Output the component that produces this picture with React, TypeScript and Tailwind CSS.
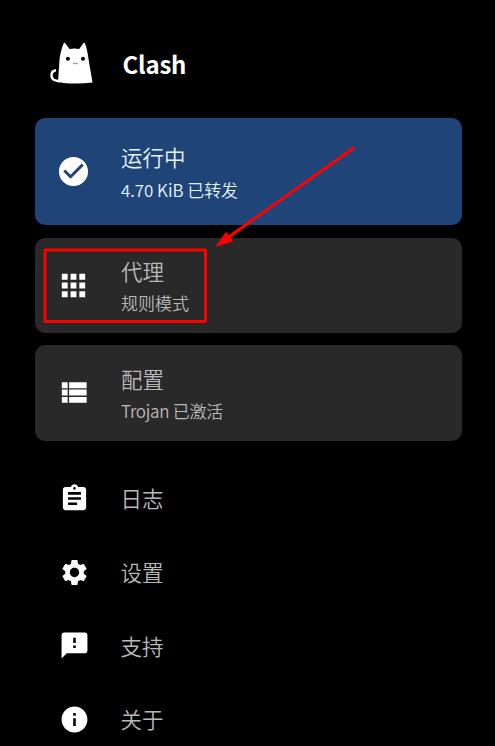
import type { ReactNode } from "react";
import { MdApps, MdAssignment, MdCheckCircle, MdFeedback, MdInfo, MdSettings } from "react-icons/md";

function CatLogo() {
  return (
    <svg viewBox="0 0 44 43" className="block h-[43px] w-[44px]" fill="white">
      <path d="M9.600 16.500C10.500 10.500 12 5 13.600 1.400c.5-1.100 1.200-.9 1.900 0l4 5.700c3.200-.7 6.500-.7 9.700 0l3.900-5.600c.7-1 1.500-1.100 1.900 0 1.600 4 2.700 9.200 3.300 14.300l4.200 24.700c-9.500 1.300-18.800 1.500-29 .4L8 39.800z" />
      <path d="M6 28.300C.1 29 -.2 37.300 6.200 38.700l4 .8" fill="none" stroke="white" strokeWidth="2.400" />
      <circle cx="17.900" cy="16.700" r="2" fill="#000" />
      <circle cx="33" cy="16.700" r="2" fill="#000" />
      <path d="M23.300 21.600c1 .3 1.700 0 2.100-.7.500.7 1.200 1 2.200.7" fill="none" stroke="#444" strokeWidth=".8" />
    </svg>
  );
}

function ViewListIcon() {
  return (
    <svg viewBox="0 0 24 24" className="size-[35px]" fill="currentColor">
      <path d="M4 14h4v-4H4v4zm0 5h4v-4H4v4zM4 9h4V5H4v4zm5 5h12v-4H9v4zm0 5h12v-4H9v4zM9 5v4h12V5H9z" />
    </svg>
  );
}

function Card({ icon, title, detail, className, titleClassName = "", detailClassName = "" }: { icon: ReactNode; title: string; detail: string; className: string; titleClassName?: string; detailClassName?: string }) {
  return (
    <section className={`flex items-center rounded-[10px] pl-[21.5px] ${className}`}>
      <div className="w-[65px] shrink-0 text-white">{icon}</div>
      <div className="whitespace-nowrap pt-[4px]">
        <div className={`text-[21.5px] ${titleClassName || "leading-[32px]"}`}>{title}</div>
        <div className={`text-[17px] leading-[32px] ${detailClassName}`}>{detail}</div>
      </div>
    </section>
  );
}

const menu = [
  { label: "日志", Icon: MdAssignment },
  { label: "设置", Icon: MdSettings },
  { label: "支持", Icon: MdFeedback },
  { label: "关于", Icon: MdInfo },
];

export default function App() {
  return (
    <main className="relative h-[746px] w-[495px] overflow-hidden bg-black pl-[34.5px] pr-[33.5px] font-['Noto_Sans_CJK_SC',sans-serif] font-[350] text-[#b8b8b8]">
      <header className="flex h-[118px] items-start pl-[15px] pt-[42px]">
        <CatLogo />
        <h1 className="ml-[29px] mt-[5px] text-[24px] font-bold leading-[34px] tracking-[-0.2px] text-white">Clash</h1>
      </header>
      <div className="flex flex-col gap-[12.5px]">
        <Card className="h-[107px] bg-[#1f4477] text-[#e5f2ff]" titleClassName="mb-[2px] leading-[30px]" detailClassName="tracking-[-0.05px]" icon={<MdCheckCircle className="size-[35px]" />} title="运行中" detail="4.70 KiB 已转发" />
        <Card className="h-[95px] bg-[#292929]" icon={<MdApps className="size-[35px]" />} title="代理" detail="规则模式" />
        <Card className="h-[95.5px] bg-[#292929]" detailClassName="tracking-[-0.3px]" icon={<ViewListIcon />} title="配置" detail="Trojan 已激活" />
      </div>
      <nav className="mt-[21px]">
        {menu.map(({ label, Icon }) => (
          <div key={label} className="flex h-[73.7px] items-center pl-[24px]">
            <Icon className="size-[31px] text-white" />
            <span className="ml-[31px] text-[21.5px] leading-[32px]">{label}</span>
          </div>
        ))}
      </nav>
      <svg viewBox="0 0 495 746" className="pointer-events-none absolute inset-0 h-[746px] w-[495px]">
        <rect x="45" y="250" width="160.5" height="71.5" rx=".5" fill="none" stroke="#f00" strokeWidth="3" />
        <path d="M354.300 147.500 228 237.500" stroke="#f00" strokeWidth="3" />
        <path d="m215.300 246.800 10.900-15.100 7.100 9.900z" fill="#f00" />
      </svg>
    </main>
  );
}
